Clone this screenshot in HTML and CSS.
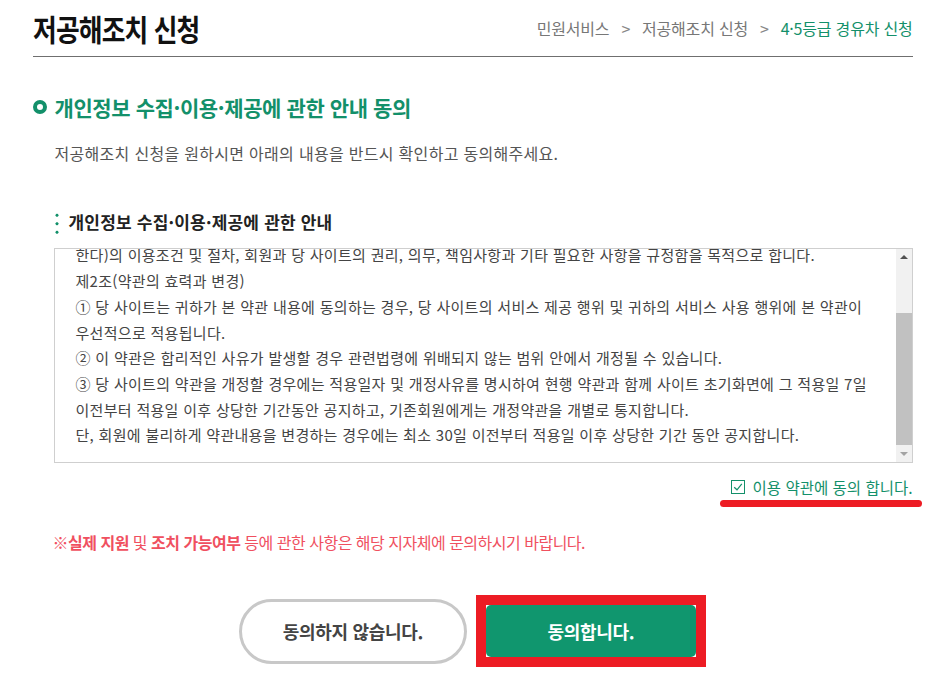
FILE: index.html
```html
<!DOCTYPE html>
<html lang="ko">
<head>
    <meta charset="UTF-8">
    <meta name="viewport" content="width=device-width, initial-scale=1.0">
    <title>저공해조치 신청</title>
    <link rel="stylesheet" href="styles.css">
</head>
<body>

    <div class="container">
        <div class="page-head">
            <h1>저공해조치 신청</h1>
            <ul class="location">
                <li>민원서비스</li>
                <li>저공해조치 신청</li>
                <li class="current">4·5등급 경유차 신청</li>
            </ul>
        </div>

        <h2 class="sec-title">개인정보 수집·이용·제공에 관한 안내 동의</h2>
        <p class="sec-desc">저공해조치 신청을 원하시면 아래의 내용을 반드시 확인하고 동의해주세요.</p>

        <h3 class="sub-title">개인정보 수집·이용·제공에 관한 안내</h3>
        <div class="terms-wrap">
            <div class="terms-box" id="termsBox">
                <p>제1조(목적)</p>
                <p>이 약관은 저공해조치 신청 사이트(이하 "당 사이트"라 한다)에서 제공하는 인터넷 관련 서비스(이하 "서비스"라<br>
                한다)의 이용조건 및 절차, 회원과 당 사이트의 권리, 의무, 책임사항과 기타 필요한 사항을 규정함을 목적으로 합니다.</p>
                <p>제2조(약관의 효력과 변경)</p>
                <p>① 당 사이트는 귀하가 본 약관 내용에 동의하는 경우, 당 사이트의 서비스 제공 행위 및 귀하의 서비스 사용 행위에 본 약관이<br>
                우선적으로 적용됩니다.</p>
                <p>② 이 약관은 합리적인 사유가 발생할 경우 관련법령에 위배되지 않는 범위 안에서 개정될 수 있습니다.</p>
                <p>③ 당 사이트의 약관을 개정할 경우에는 적용일자 및 개정사유를 명시하여 현행 약관과 함께 사이트 초기화면에 그 적용일 7일<br>
                이전부터 적용일 이후 상당한 기간동안 공지하고, 기존회원에게는 개정약관을 개별로 통지합니다.</p>
                <p>단, 회원에 불리하게 약관내용을 변경하는 경우에는 최소 30일 이전부터 적용일 이후 상당한 기간 동안 공지합니다.</p>
            </div>
            <div class="scrollbar">
                <span class="arrow arrow-up"></span>
                <div class="track" id="scrollTrack">
                    <span class="thumb" id="scrollThumb"></span>
                </div>
                <span class="arrow arrow-down"></span>
            </div>
        </div>

        <div class="agree-row">
            <label class="agree-check">
                <svg class="check-icon" width="14" height="14" viewBox="0 0 14 14">
                    <rect x="0.5" y="0.5" width="13" height="13" fill="none" stroke="#13906a" stroke-width="1"/>
                    <path d="M3.2 7.2 L6 9.8 L10.8 3.8" fill="none" stroke="#13906a" stroke-width="1.2"/>
                </svg>
                이용 약관에 동의 합니다.
            </label>
            <span class="mark-line"></span>
        </div>

        <p class="notice">※<strong>실제 지원</strong> 및 <strong>조치 가능여부</strong> 등에 관한 사항은 해당 지자체에 문의하시기 바랍니다.</p>

        <div class="btn-area">
            <button class="btn btn-cancel">동의하지 않습니다.</button>
            <span class="mark-box">
                <button class="btn btn-ok">동의합니다.</button>
            </span>
        </div>
    </div>

    <script src="script.js"></script>
</body>
</html>
```

FILE: styles.css
```css
html, body {
    margin: 0;
    padding: 0;
    background: #fff;
    overflow: hidden;
}
body {
    font-family: "Noto Sans CJK KR", "Noto Sans", sans-serif;
    color: #444;
}
.container {
    width: 880px;
    margin: 0 auto;
}
.page-head {
    display: flex;
    align-items: center;
    justify-content: space-between;
    height: 56px;
    border-bottom: 1px solid #6f6f6f;
}
.page-head h1 {
    margin: 0;
    font-size: 30px;
    font-weight: 700;
    color: #111;
    letter-spacing: -1px;
    display: inline-block;
    transform: scaleX(0.86);
    transform-origin: left center;
}
.location {
    display: flex;
    list-style: none;
    margin: 0;
    padding: 0;
    font-size: 16px;
    letter-spacing: -0.2px;
    color: #777;
}
.location li + li::before {
    content: ">";
    margin: 0 12px 0 12px;
    color: #888;
}
.location .current {
    color: #13906a;
}
.sec-title {
    display: flex;
    align-items: center;
    margin: 35px 0 0;
    font-size: 21px;
    line-height: 30px;
    letter-spacing: -0.4px;
    font-weight: 700;
    color: #13906a;
}
.sec-title::before {
    content: "";
    width: 6px;
    height: 6px;
    border: 4px solid #13906a;
    border-radius: 50%;
    margin-right: 8px;
}
.sec-desc {
    margin: 19px 0 0 22px;
    font-size: 16px;
    line-height: 24px;
    letter-spacing: 0.3px;
    color: #555;
}
.sub-title {
    position: relative;
    margin: 44px 0 0 22px;
    padding-left: 14px;
    font-size: 17px;
    line-height: 26px;
    letter-spacing: 0.2px;
    font-weight: 700;
    color: #222;
}
.sub-title::before {
    content: "";
    position: absolute;
    left: 0;
    top: 2px;
    width: 4px;
    height: 24px;
    background: radial-gradient(circle, #13906a 1.4px, transparent 1.8px) 0 0 / 4px 8.5px repeat-y;
}
.terms-wrap {
    position: relative;
    margin: 13px 0 0 21px;
    border: 1px solid #cfcfcf;
}
.terms-box {
    height: 182px;
    padding: 17px 0 14px 21px;
    overflow-y: scroll;
    overflow-x: hidden;
    scrollbar-width: none;
    font-size: 15px;
    line-height: 25.7px;
    letter-spacing: 0.3px;
    color: #444;
    white-space: nowrap;
}
.terms-box p {
    margin: 0;
}
.scrollbar {
    position: absolute;
    top: 0;
    right: 0;
    bottom: 0;
    width: 16px;
    display: flex;
    flex-direction: column;
    background: #f1f1f1;
}
.arrow {
    position: relative;
    height: 17px;
    flex: none;
}
.arrow::after {
    content: "";
    position: absolute;
    left: 4px;
    border-left: 4px solid transparent;
    border-right: 4px solid transparent;
}
.arrow-up::after {
    top: 6px;
    border-bottom: 4px solid #505050;
}
.arrow-down::after {
    top: 7px;
    border-top: 4px solid #a3a3a3;
}
.track {
    position: relative;
    flex: 1;
}
.thumb {
    position: absolute;
    left: 0;
    right: 0;
    background: #c1c1c1;
}
.agree-row {
    position: relative;
    display: flex;
    justify-content: flex-end;
    margin-top: 13px;
}
.agree-check {
    display: flex;
    align-items: center;
    font-size: 15.5px;
    line-height: 22px;
    color: #13906a;
}
.check-icon {
    margin-right: 8px;
}
.mark-line {
    position: absolute;
    right: -9px;
    top: 24px;
    width: 202px;
    height: 7px;
    border-radius: 4px;
    background: #ed1c24;
}
.notice {
    margin: 33px 0 0 20px;
    font-size: 16px;
    line-height: 22px;
    letter-spacing: -0.5px;
    color: #f0505f;
}
.notice strong {
    font-weight: 700;
}
.btn-area {
    display: flex;
    justify-content: center;
    align-items: center;
    gap: 9px;
    margin-top: 42px;
}
.btn {
    font-family: inherit;
    font-size: 18px;
    font-weight: 700;
    letter-spacing: -0.3px;
    cursor: pointer;
}
.btn-cancel {
    width: 228px;
    height: 65px;
    border: 3px solid #c8c8c8;
    border-radius: 33px;
    background: #fff;
    color: #444;
}
.mark-box {
    display: block;
    border: 10px solid #ed1c24;
    background: #fff;
}
.btn-ok {
    display: block;
    width: 210px;
    height: 52px;
    border: none;
    border-radius: 5px;
    background: #10966e;
    color: #fff;
}
```

FILE: script.js
```js
// 약관 박스를 맨 아래까지 내리고 스크롤바 위치 표시
const termsBox = document.getElementById("termsBox");
const track = document.getElementById("scrollTrack");
const thumb = document.getElementById("scrollThumb");

termsBox.scrollTop = termsBox.scrollHeight;

const trackHeight = track.clientHeight;
const ratio = termsBox.clientHeight / termsBox.scrollHeight;
thumb.style.height = Math.round(trackHeight * ratio) + "px";
thumb.style.top = Math.round(trackHeight * termsBox.scrollTop / termsBox.scrollHeight) + "px";
```
